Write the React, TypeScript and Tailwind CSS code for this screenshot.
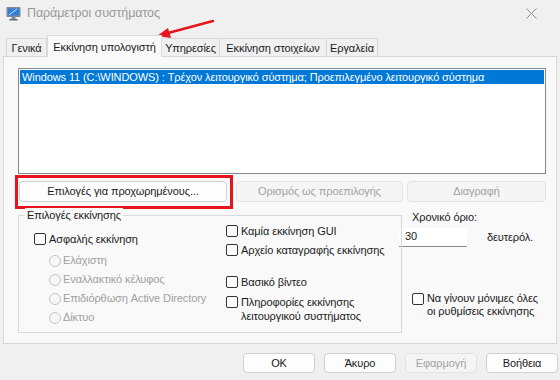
import React from "react";

const font = { fontFamily: '"Liberation Sans", Arial, sans-serif' };

function Btn({ children, disabled, className = "" }: { children: React.ReactNode; disabled?: boolean; className?: string }) {
  return (
    <div
      className={
        "flex items-center justify-center whitespace-nowrap rounded-[4px] border text-[11px] tracking-[-0.1px] " +
        (disabled ? "border-[#e3e3e3] bg-[#f5f5f5] text-[#a2a2a2] " : "border-[#d0d0d0] bg-[#fdfdfd] text-[#1a1a1a] ") +
        className
      }
    >
      {children}
    </div>
  );
}

function Check({ label, className = "", lh = "leading-[14px]" }: { label: React.ReactNode; className?: string; lh?: string }) {
  return (
    <div className={"flex items-start gap-[3px] whitespace-nowrap text-[11px] text-[#1a1a1a] " + lh + " " + className}>
      <div className="mt-[1px] h-[12px] w-[12px] shrink-0 rounded-[2px] border border-[#333] bg-[#fcfcfc]" />
      <div>{label}</div>
    </div>
  );
}

function Radio({ label }: { label: string }) {
  return (
    <div className="flex h-[19px] items-center gap-[2px] whitespace-nowrap text-[11px] text-[#a0a0a0]">
      <div className="h-[12px] w-[12px] rounded-full border border-[#c4c4c4] bg-[#f7f7f7]" />
      <div>{label}</div>
    </div>
  );
}

export default function App() {
  return (
    <div className="relative h-[380px] w-[560px] overflow-hidden bg-[#f0f0f0] text-[#1a1a1a] tracking-[-0.1px]" style={font}>
      {/* title bar */}
      <div className="flex h-[27px] items-center pl-[6px]">
        <svg width="15" height="15" viewBox="0 0 15 15">
          <rect x="0.5" y="1" width="14" height="10" rx="1" fill="#7a8a99" />
          <rect x="2" y="2.5" width="11" height="7" fill="#2f7fd8" />
          <path d="M3 9 L11 3" stroke="#cfe6ff" strokeWidth="1" />
          <rect x="5.5" y="11" width="4" height="2" fill="#7a8a99" />
          <rect x="3.5" y="13" width="8" height="1.5" fill="#5d6b78" />
        </svg>
        <div className="ml-[6px] whitespace-nowrap text-[12.5px] text-[#9a9a9a]">Παράμετροι συστήματος</div>
        <div className="ml-auto mr-[23px]">
          <svg width="11" height="11" viewBox="0 0 11 11">
            <path d="M0.5 0.5 L10.5 10.5 M10.5 0.5 L0.5 10.5" stroke="#8a8a8a" strokeWidth="1" />
          </svg>
        </div>
      </div>

      {/* tabs */}
      <div className="mt-[8px] flex h-[21px] items-end whitespace-nowrap pl-[6px] text-[11px]">
        <div className="flex h-[18px] w-[41px] items-center justify-center border border-b-0 border-[#d9d9d9] bg-[#f0f0f0] pt-[1px]">Γενικά</div>
        <div className="relative z-10 -mb-px flex h-[22px] w-[115px] items-start justify-center border border-b-0 border-[#d9d9d9] bg-[#f9f9f9] pt-[3px]">Εκκίνηση υπολογιστή</div>
        <div className="flex h-[18px] w-[58px] items-center justify-center border border-b-0 border-l-0 border-[#d9d9d9] bg-[#f0f0f0] pt-[1px]">Υπηρεσίες</div>
        <div className="flex h-[18px] w-[107px] items-center justify-center border border-b-0 border-l-0 border-[#d9d9d9] bg-[#f0f0f0] pt-[1px]">Εκκίνηση στοιχείων</div>
        <div className="flex h-[18px] w-[51px] items-center justify-center border border-b-0 border-l-0 border-[#d9d9d9] bg-[#f0f0f0] pt-[1px]">Εργαλεία</div>
      </div>

      {/* panel */}
      <div className="mx-[3px] h-[288px] border border-[#d9d9d9] bg-[#f9f9f9] pl-[14px] pr-[9px] pt-[11px]">
        {/* listbox */}
        <div className="h-[106px] w-[528px] border border-[#828790] bg-white p-px">
          <div className="flex h-[14px] items-center whitespace-nowrap bg-[#0078d7] pl-[2px] text-[11px] text-white">
            Windows 11 (C:\WINDOWS) : Τρέχον λειτουργικό σύστημα; Προεπιλεγμένο λειτουργικό σύστημα
          </div>
        </div>

        {/* buttons row */}
        <div className="mt-[6px] flex items-start">
          <div className="relative h-[26px] w-[215px]">
            <Btn className="absolute left-[1px] top-[1px] h-[21px] w-[208px]">Επιλογές για προχωρημένους...</Btn>
            <div className="absolute -left-[3px] -top-[5px] h-[34px] w-[218px] border-[3px] border-[#e8141c]" />
          </div>
          <Btn disabled className="ml-[3px] mt-[1px] h-[21px] w-[167px]">Ορισμός ως προεπιλογής</Btn>
          <Btn disabled className="ml-[4px] mt-[1px] h-[21px] w-[139px]">Διαγραφή</Btn>
        </div>

        {/* lower area */}
        <div className="mt-[9px] flex">
          <div className="relative h-[118px] w-[384px] border border-[#d9d9d9] pl-[15px]">
            <div className="absolute -top-[8px] left-[6px] whitespace-nowrap bg-[#f9f9f9] px-[2px] text-[11px] leading-[14px]">Επιλογές εκκίνησης</div>
            <div className="flex pt-[16px]">
              <div className="w-[192px]">
                <Check label="Ασφαλής εκκίνηση" />
                <div className="mt-[5px] pl-[15px]">
                  <Radio label="Ελάχιστη" />
                  <Radio label="Εναλλακτικό κέλυφος" />
                  <Radio label="Επιδιόρθωση Active Directory" />
                  <Radio label="Δίκτυο" />
                </div>
              </div>
              <div className="-mt-[8px] flex flex-col">
                <Check label="Καμία εκκίνηση GUI" />
                <Check label="Αρχείο καταγραφής εκκίνησης" className="mt-[5px]" />
                <Check label="Βασικό βίντεο" className="mt-[18px]" />
                <Check
                  label={
                    <>
                      Πληροφορίες εκκίνησης
                      <br />
                      λειτουργικού συστήματος
                    </>
                  }
                  className="mt-[6px]"
                />
              </div>
            </div>
          </div>
          <div className="-ml-[3px] flex flex-col">
            <div className="-mt-[6px] whitespace-nowrap pl-[13px] text-[11px]">Χρονικό όριο:</div>
            <div className="mt-[2px] flex items-center">
              <div className="flex h-[19px] w-[68px] items-center border-b border-[#8a8a8a] bg-white pl-[6px] text-[11px]">30</div>
              <div className="ml-[20px] whitespace-nowrap text-[11px]">δευτερόλ.</div>
            </div>
            <Check
              className="ml-[13px] mt-[45px]"
              lh="leading-[13px]"
              label={
                <>
                  Να γίνουν μόνιμες όλες
                  <br />
                  οι ρυθμίσεις εκκίνησης
                </>
              }
            />
          </div>
        </div>
      </div>

      {/* bottom buttons */}
      <div className="mt-[9px] flex justify-end gap-[9px] pr-[2px]">
        <Btn className="h-[20px] w-[72px]">OK</Btn>
        <Btn className="h-[20px] w-[72px]">Άκυρο</Btn>
        <Btn disabled className="h-[20px] w-[72px]">Εφαρμογή</Btn>
        <Btn className="h-[20px] w-[72px]">Βοήθεια</Btn>
      </div>

      {/* red arrow annotation */}
      <svg className="absolute left-0 top-0" width="560" height="380" viewBox="0 0 560 380">
        <path d="M213 21 L168 33" stroke="#e8141c" strokeWidth="2.5" strokeLinecap="round" />
        <path d="M157 36 L168 28 L171 38 Z" fill="#e8141c" />
      </svg>
    </div>
  );
}
